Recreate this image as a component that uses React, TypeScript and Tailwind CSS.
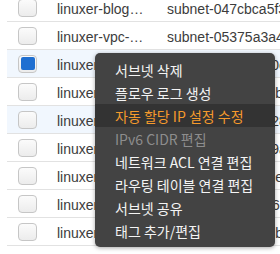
import React from "react";

const rows = [
  { name: "linuxer-blog-public-a", subnet: "subnet-047cbca5f3e1", selected: false, hover: false },
  { name: "linuxer-vpc-private-a", subnet: "subnet-05375a3a4d2e", selected: false, hover: false },
  { name: "linuxer-vpc-private-c", subnet: "subnet-0b21e9fc0c91", selected: true, hover: false },
  { name: "linuxer-vpc-public-c", subnet: "subnet-0a7e1c93b38d", selected: false, hover: false },
  { name: "linuxer-vpc-db-a", subnet: "subnet-0f3e5d1c2883", selected: false, hover: true },
  { name: "linuxer-vpc-db-c", subnet: "subnet-0c7d4e2f9aA1", selected: false, hover: false },
  { name: "linuxer-vpc-app-a", subnet: "subnet-08d2a4c7e122", selected: false, hover: false },
  { name: "linuxer-vpc-app-c", subnet: "subnet-0e9b3f1d6aa4", selected: false, hover: false },
  { name: "linuxer-vpc-mgmt", subnet: "subnet-01c5a7e3b9f0", selected: false, hover: false },
];

const items: { label: string; kind: "normal" | "active" | "disabled" }[] = [
  { label: "서브넷 삭제", kind: "normal" },
  { label: "플로우 로그 생성", kind: "normal" },
  { label: "자동 할당 IP 설정 수정", kind: "active" },
  { label: "IPv6 CIDR 편집", kind: "disabled" },
  { label: "네트워크 ACL 연결 편집", kind: "normal" },
  { label: "라우팅 테이블 연결 편집", kind: "normal" },
  { label: "서브넷 공유", kind: "normal" },
  { label: "태그 추가/편집", kind: "normal" },
];

function Checkbox({ checked }: { checked: boolean }) {
  return (
    <div className="w-[19px] h-[18px] rounded-[4px] border border-[#c6c6c6] bg-gradient-to-b from-[#fbfbfb] to-[#ececec] flex items-center justify-center shrink-0">
      {checked ? <div className="w-[14px] h-[13px] rounded-[2px] bg-[#1f6fd1]" /> : null}
    </div>
  );
}

export default function App() {
  return (
    <div
      className="relative w-[280px] h-[254px] overflow-hidden bg-white"
      style={{ fontFamily: '"Liberation Sans", Arial, "Noto Sans CJK KR", sans-serif' }}
    >
      <div className="mt-[-6px] ml-[7px] flex flex-col">
        {rows.map((r, i) => (
          <div
            key={i}
            className={`h-[28px] flex items-center border-b border-[#e2e2e2] ${
              r.selected || r.hover ? "bg-[#f1f7fe]" : "bg-white"
            }`}
          >
            <div className="w-[50px] pl-[11px] flex items-center shrink-0">
              <Checkbox checked={r.selected} />
            </div>
            <div className="w-[88px] shrink-0 truncate text-[14px] leading-[16px] text-[#3c3c3c] pt-[3px]">
              {r.name}
            </div>
            <div className="ml-[22px] whitespace-nowrap text-[14px] leading-[16px] text-[#3c3c3c] pt-[3px]">
              {r.subnet}
            </div>
          </div>
        ))}
      </div>

      <div
        className="absolute left-[95px] top-[53px] w-[180px] h-[194px] rounded-[5px] bg-[#434343] py-[5px] flex flex-col shadow-[0_1px_4px_rgba(0,0,0,0.35)]"
        style={{ fontFamily: '"Noto Sans CJK KR", "Liberation Sans", sans-serif' }}
      >
        {items.map((it, i) => (
          <div
            key={i}
            className={`h-[23px] shrink-0 flex items-center pl-[20px] text-[14px] leading-[16px] whitespace-nowrap ${
              it.kind === "active"
                ? "bg-[#333333] text-[#f59a2c]"
                : it.kind === "disabled"
                ? "text-[#8d8d8d]"
                : "text-[#f4f4f4]"
            }`}
          >
            {it.label}
          </div>
        ))}
      </div>
    </div>
  );
}
